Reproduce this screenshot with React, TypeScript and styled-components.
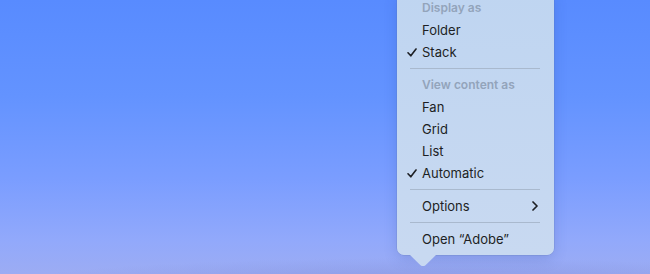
import React from "react";
import styled, { createGlobalStyle } from "styled-components";

const Global = createGlobalStyle`
  html, body { margin: 0; padding: 0; }
  body { width: 650px; height: 274px; overflow: hidden; font-family: Inter, "Noto Sans", sans-serif; }
`;

const Desktop = styled.div`
  position: relative;
  width: 650px;
  height: 274px;
  overflow: hidden;
  background:
    radial-gradient(ellipse 420px 26px at 430px 284px, rgba(105, 120, 200, 0.35), rgba(105, 120, 200, 0) 100%),
    linear-gradient(
      to bottom,
      #588bff 0%,
      #6393ff 35%,
      #7a9dff 65%,
      #92a9fb 88%,
      #9cacf3 100%
    );
`;

const Menu = styled.div`
  position: absolute;
  left: 397px;
  top: -8px;
  width: 157px;
  padding: 5px 0;
  box-sizing: border-box;
  border-radius: 7px;
  background: linear-gradient(to bottom, #bfd5f1, #c8d9f1);
  box-shadow: 0 0 0 0.5px rgba(90, 110, 160, 0.35), 0 4px 14px rgba(40, 60, 140, 0.18);
  display: flex;
  flex-direction: column;
`;

const Row = styled.div<{ $header?: boolean }>`
  height: 22px;
  line-height: 22px;
  padding: 0 16px 0 10px;
  display: flex;
  align-items: center;
  font-size: ${(p) => (p.$header ? "12px" : "13px")};
  font-weight: ${(p) => (p.$header ? 600 : 400)};
  color: ${(p) => (p.$header ? "#93a4bb" : "#1d1f24")};
`;

const CheckSlot = styled.span`
  width: 15px;
  flex: none;
  display: flex;
  align-items: center;
`;

const Label = styled.span`
  flex: 1;
`;

const Separator = styled.div`
  height: 1px;
  margin: 5px 14px 5px 13px;
  background: #a9b9ce;
`;

const Tail = styled.svg`
  position: absolute;
  left: 12px;
  bottom: -12px;
  width: 28px;
  height: 13px;
`;

type Item = { label: string; header?: boolean; checked?: boolean; sub?: boolean } | "sep";

const items: Item[] = [
  { label: "Display as", header: true },
  { label: "Folder" },
  { label: "Stack", checked: true },
  "sep",
  { label: "View content as", header: true },
  { label: "Fan" },
  { label: "Grid" },
  { label: "List" },
  { label: "Automatic", checked: true },
  "sep",
  { label: "Options", sub: true },
  "sep",
  { label: "Open \u201CAdobe\u201D" },
];

export default function App() {
  return (
    <>
      <Global />
      <Desktop>
        <Menu>
          {items.map((it, i) =>
            it === "sep" ? (
              <Separator key={i} />
            ) : (
              <Row key={i} $header={it.header}>
                <CheckSlot>
                  {it.checked && (
                    <svg width="10" height="9" viewBox="0 0 10 9">
                      <path
                        d="M1 4.8 L3.8 7.8 L9 1"
                        fill="none"
                        stroke="#1d1f24"
                        strokeWidth="1.6"
                        strokeLinecap="round"
                        strokeLinejoin="round"
                      />
                    </svg>
                  )}
                </CheckSlot>
                <Label>{it.label}</Label>
                {it.sub && (
                  <svg width="6" height="10" viewBox="0 0 6 10">
                    <path
                      d="M1 1 L5 5 L1 9"
                      fill="none"
                      stroke="#1d1f24"
                      strokeWidth="1.7"
                      strokeLinecap="round"
                      strokeLinejoin="round"
                    />
                  </svg>
                )}
              </Row>
            )
          )}
          <Tail viewBox="0 0 28 13">
            <path d="M0 0 L11.5 11.2 Q14 13 16.5 11.2 L28 0 Z" fill="#c8d9f1" />
          </Tail>
        </Menu>
      </Desktop>
    </>
  );
}
